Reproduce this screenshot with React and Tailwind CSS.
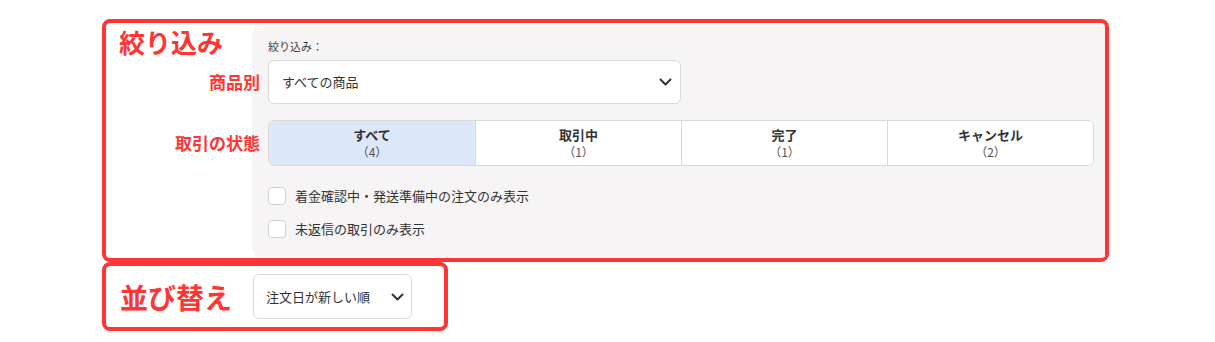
import React from "react"

const tabs = [
  { label: "すべて", count: 4, active: true },
  { label: "取引中", count: 1 },
  { label: "完了", count: 1 },
  { label: "キャンセル", count: 2 },
]

const Chevron = () => (
  <svg width="13" height="8" viewBox="0 0 13 8" fill="none">
    <path d="M1.5 1.5L6.5 6.5L11.5 1.5" stroke="#333" strokeWidth="2" strokeLinecap="round" strokeLinejoin="round" />
  </svg>
)

const Check = ({ text }) => (
  <label className="flex items-center gap-[9px] h-[18px]">
    <span className="w-[18px] h-[18px] rounded-[4px] border border-[#cfcfcf] bg-white" />
    <span className="text-[13px] text-[#333]">{text}</span>
  </label>
)

export default function App() {
  return (
    <div
      className="w-[1215px] h-[342px] bg-white pl-[102px] pt-[19px]"
      style={{ fontFamily: '"Noto Sans CJK JP", "Noto Sans", sans-serif' }}
    >
      {/* 絞り込み */}
      <div className="w-[1007px] h-[243px] border-4 border-[#ff3535] rounded-lg flex">
        <div className="w-[146px] shrink-0 pl-[13px] pt-[2px]">
          <h2 className="text-[26px] leading-[34px] font-bold text-[#ff3535]">絞り込み</h2>
        </div>
        <div className="flex-1 mt-[3px] mb-[1px] bg-[#f6f4f4] rounded-l-lg pl-[16px] pt-[12px]">
          <p className="text-[11px] leading-4 text-[#444]">絞り込み：</p>
          <div className="relative mt-[6px] w-[413px]">
            <span className="absolute right-full mr-[8px] top-1/2 -translate-y-1/2 whitespace-nowrap text-[17px] font-bold text-[#ff3535]">
              商品別
            </span>
            <div className="h-[44px] bg-white border border-[#d9d9d9] rounded-md flex items-center justify-between pl-[13px] pr-[8px]">
              <span className="text-[13px] text-[#333]">すべての商品</span>
              <Chevron />
            </div>
          </div>
          <div className="relative mt-[16px] w-[826px]">
            <span className="absolute right-full mr-[8px] top-1/2 -translate-y-1/2 whitespace-nowrap text-[17px] font-bold text-[#ff3535]">
              取引の状態
            </span>
            <div className="grid grid-cols-4 h-[46px] border border-[#d9d9d9] rounded-md overflow-hidden bg-white">
              {tabs.map((t, i) => (
                <div
                  key={t.label}
                  className={
                    "flex flex-col items-center pt-[5px] " +
                    (t.active ? "bg-[#dde7fa] " : "bg-white ") +
                    (i > 0 ? "border-l border-[#d9d9d9]" : "")
                  }
                >
                  <span className="text-[13px] leading-[18px] font-bold text-[#333]">{t.label}</span>
                  <span className="text-[12px] leading-4 text-[#555]">（{t.count}）</span>
                </div>
              ))}
            </div>
          </div>
          <div className="mt-[21px] flex flex-col gap-[15px]">
            <Check text="着金確認中・発送準備中の注文のみ表示" />
            <Check text="未返信の取引のみ表示" />
          </div>
        </div>
      </div>

      {/* 並び替え */}
      <div className="w-[346px] h-[69px] border-4 border-[#ff3535] rounded-lg flex items-center pl-[14px]">
        <h2 className="text-[28px] leading-[34px] font-bold text-[#ff3535]">並び替え</h2>
        <div className="ml-[21px] w-[159px] h-[45px] bg-white border border-[#d9d9d9] rounded-md flex items-center justify-between pl-[12px] pr-[7px]">
          <span className="text-[13px] text-[#333]">注文日が新しい順</span>
          <Chevron />
        </div>
      </div>
    </div>
  )
}
